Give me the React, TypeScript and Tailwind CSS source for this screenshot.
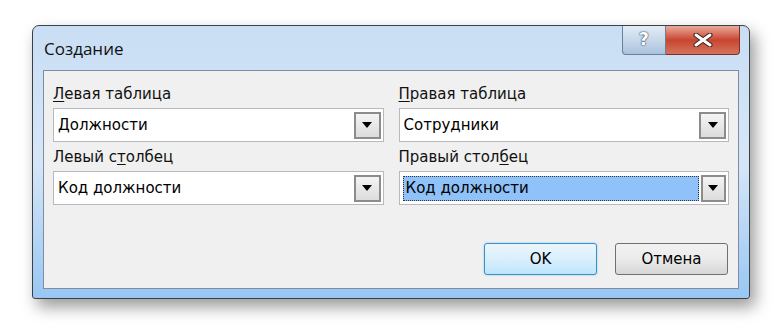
import React from "react"

const font = { fontFamily: '"DejaVu Sans", Tahoma, sans-serif' }

function Arrow() {
  return (
    <svg width="10" height="6" viewBox="0 0 10 6">
      <path d="M0 0 L10 0 L5 6 Z" fill="#000" />
    </svg>
  )
}

function Combo({ value, selected }: { value: string; selected?: boolean }) {
  return (
    <div className="flex h-[34px] items-center border border-[#b7b9bd] bg-white pl-[2px] pr-[2px]">
      <div className="flex h-[28px] flex-1 items-center">
        {selected ? (
          <div className="ml-[1px] flex h-[25px] w-[296px] items-center border border-dotted border-[#333] bg-[#8fc2f8] pl-[2px] text-[15px] text-black">
            {value}
          </div>
        ) : (
          <span className="pl-[2px] text-[15px] text-black">{value}</span>
        )}
      </div>
      <div className="ml-[2px] flex h-[27px] w-[27px] items-center justify-center border-2 border-[#8c8c8c] bg-gradient-to-b from-[#f4f4f4] to-[#dcdcdc]">
        <Arrow />
      </div>
    </div>
  )
}

function Label({ pre, u, post }: { pre: string; u: string; post: string }) {
  return (
    <div className="mb-[4px] h-[19px] text-[15px] leading-[19px] text-[#111]">
      {pre}
      <span className="underline underline-offset-2">{u}</span>
      {post}
    </div>
  )
}

export default function App() {
  return (
    <div className="h-[329px] w-[783px] bg-white pl-[32px] pt-[25px]" style={font}>
      <div className="w-[718px] rounded-t-[7px] rounded-b-[3px] border border-[#3b3f46] bg-gradient-to-b from-[#c9def4] via-[#d6e6f7] to-[#98c7f3] shadow-[5px_8px_16px_rgba(0,0,0,0.4)]">
        <div className="flex h-[44px] items-start">
          <div className="flex-1 pl-[11px] pt-[12px] text-[17px] leading-[22px] text-[#111]" style={{ fontFamily: '"Open Sans", "DejaVu Sans", sans-serif' }}>
            Создание
          </div>
          <div className="mr-[9px] flex">
            <div className="flex h-[29px] w-[44px] items-center justify-center rounded-bl-[4px] border border-t-0 border-[#6d7f96] bg-gradient-to-b from-[#e2ecf7] via-[#c8d8ea] to-[#a9c2dc] text-[17px] font-bold text-white [text-shadow:0_0_2px_#2b3b50,0_0_1px_#2b3b50]">
              ?
            </div>
            <div className="flex h-[29px] w-[74px] items-center justify-center rounded-br-[4px] border border-l-0 border-t-0 border-[#7a3024] bg-gradient-to-b from-[#e9a99c] via-[#c8442f] to-[#d4735c]">
              <svg width="20" height="14" viewBox="0 0 20 14">
                <path d="M3 2 L17 12 M17 2 L3 12" stroke="#3b2420" strokeWidth="5" strokeLinecap="round" />
                <path d="M3 2 L17 12 M17 2 L3 12" stroke="#fff" strokeWidth="3" strokeLinecap="round" />
              </svg>
            </div>
          </div>
        </div>
        <div className="mx-[10px] mb-[9px] border border-[#7d8ea3] bg-[#f0f0f0] px-[9px] pb-[13px] pt-[14px]">
          <div className="grid grid-cols-2 gap-x-[15px]">
            <div>
              <Label pre="" u="Л" post="евая таблица" />
              <Combo value="Должности" />
              <div className="h-[6px]" />
              <Label pre="Левый с" u="т" post="олбец" />
              <Combo value="Код должности" />
            </div>
            <div>
              <Label pre="" u="П" post="равая таблица" />
              <Combo value="Сотрудники" />
              <div className="h-[6px]" />
              <Label pre="Правый стол" u="б" post="ец" />
              <Combo value="Код должности" selected />
            </div>
          </div>
          <div className="mt-[38px] flex justify-end gap-[18px] pr-[1px]">
            <button className="h-[32px] w-[113px] rounded-[3px] border border-[#3c8fc4] bg-gradient-to-b from-[#eaf6fd] via-[#d9effc] to-[#bee6fd] text-[15px] text-black shadow-[0_0_2px_#6fc6f5]">
              OK
            </button>
            <button className="h-[32px] w-[113px] rounded-[3px] border border-[#707070] bg-gradient-to-b from-[#f2f2f2] via-[#ebebeb] to-[#d6d6d6] text-[15px] text-black">
              Отмена
            </button>
          </div>
        </div>
      </div>
    </div>
  )
}
